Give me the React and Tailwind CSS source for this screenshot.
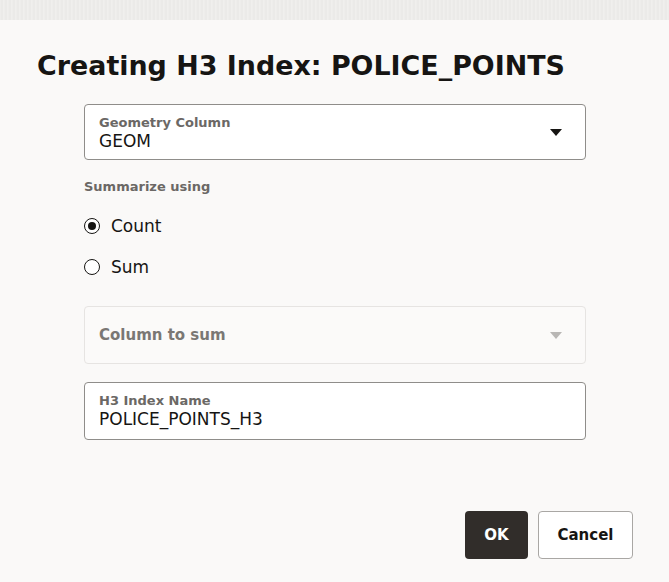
import React from "react";

const font = { fontFamily: '"DejaVu Sans", sans-serif' };

const Caret = ({ light }) => (
  <svg width="12" height="7" viewBox="0 0 12 7" className={light ? "text-[#b9b7b5]" : "text-[#161513]"}>
    <path d="M0 0 H12 L6 7 Z" fill="currentColor" />
  </svg>
);

const Radio = ({ checked, label }) => (
  <label className="flex items-center h-[20px]">
    <span className="w-[16px] h-[16px] rounded-full border-[1.5px] border-[#161513] flex items-center justify-center bg-white">
      {checked && <span className="w-[8px] h-[8px] rounded-full bg-[#161513]"></span>}
    </span>
    <span className="ml-[11px] text-[17px] leading-[20px] text-[#161513]">{label}</span>
  </label>
);

export default function App() {
  return (
    <div style={font} className="w-[669px] h-[582px] bg-[#faf9f8] flex flex-col overflow-hidden">
      {/* textured strip above the dialog */}
      <div className="h-[20px] bg-[repeating-linear-gradient(90deg,#f0efed_0px,#e9e8e6_2px,#f2f1ef_4px)]"></div>

      <div className="flex-1 flex flex-col">
        <h1 className="mt-[30px] ml-[37px] text-[26.9px] leading-[32px] font-bold text-[#161513]">
          Creating H3 Index: POLICE_POINTS
        </h1>

        <div className="ml-[84px] w-[502px] mt-[22px] flex flex-col">
          {/* Geometry Column */}
          <div className="h-[56px] bg-white border border-[#8f8d8a] rounded-[4px] pl-[14px] pr-[23px] flex items-center">
            <div className="flex-1 flex flex-col pt-[3px]">
              <span className="text-[13px] leading-[16px] font-bold text-[#6b6865]">Geometry Column</span>
              <span className="text-[17px] leading-[21px] text-[#161513]">GEOM</span>
            </div>
            <Caret />
          </div>

          <div className="mt-[19px] text-[13px] leading-[16px] font-bold text-[#6b6865]">Summarize using</div>

          <div className="mt-[21px] flex flex-col gap-[21px]">
            <Radio checked label="Count" />
            <Radio label="Sum" />
          </div>

          {/* Column to sum (disabled) */}
          <div className="mt-[29px] h-[58px] bg-[#fbfaf9] border border-[#e6e4e2] rounded-[4px] pl-[14px] pr-[23px] flex items-center">
            <span className="flex-1 text-[15px] leading-[18px] font-bold text-[#7a7774]">Column to sum</span>
            <Caret light />
          </div>

          {/* H3 Index Name */}
          <div className="mt-[18px] h-[58px] bg-white border border-[#8f8d8a] rounded-[4px] pl-[14px] pt-[1px] flex flex-col justify-center">
            <span className="text-[13px] leading-[16px] font-bold text-[#6b6865]">H3 Index Name</span>
            <span className="text-[17px] leading-[21px] text-[#161513]">POLICE_POINTS_H3</span>
          </div>
        </div>

        <div className="mt-auto mb-[23px] mr-[36px] flex justify-end gap-[10px]">
          <button className="h-[48px] w-[63px] rounded-[4px] bg-[#312d2a] text-white text-[15px] font-bold">
            OK
          </button>
          <button className="h-[48px] w-[95px] rounded-[4px] bg-white border border-[#a9a7a4] text-[#161513] text-[15px] font-bold">
            Cancel
          </button>
        </div>
      </div>
    </div>
  );
}
